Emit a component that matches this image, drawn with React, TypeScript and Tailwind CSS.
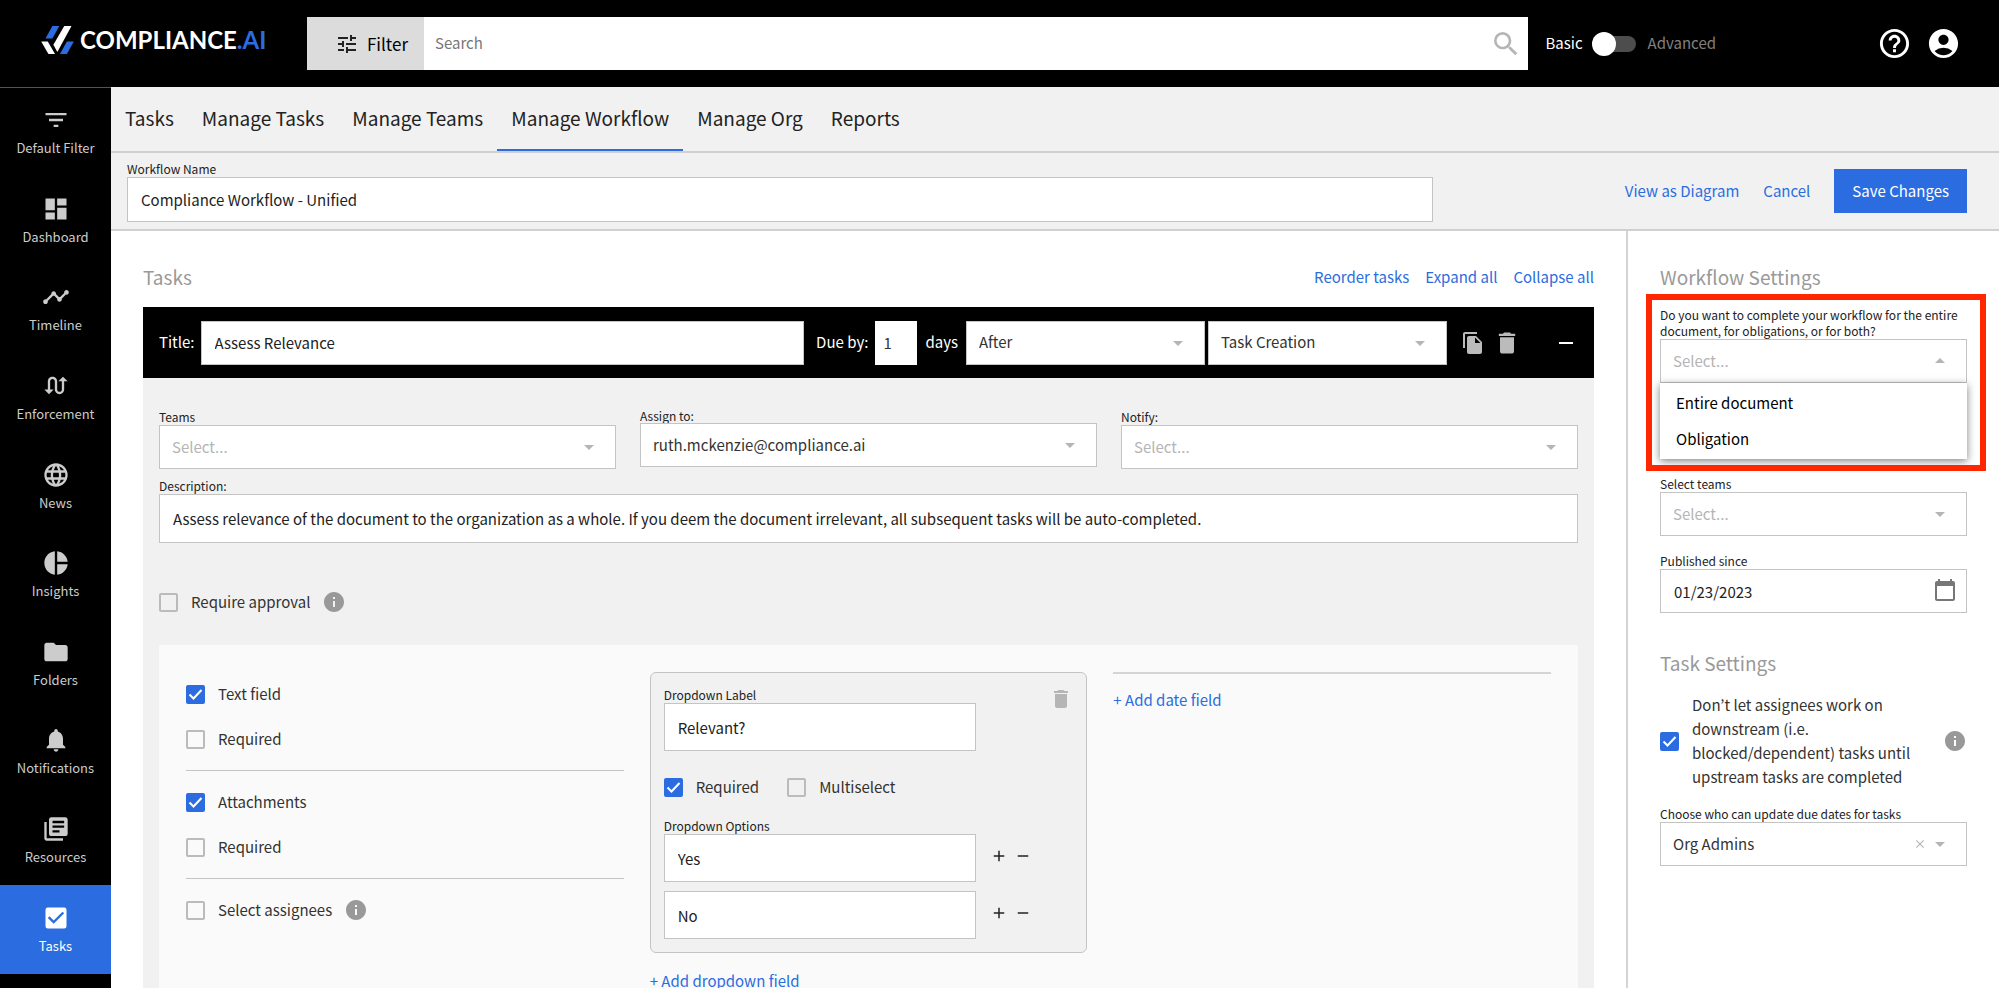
import { useState } from "react";
import type { ReactNode } from "react";
import type { IconType } from "react-icons";
import {
  MdAccountCircle,
  MdAdd,
  MdArrowDropDown,
  MdArrowDropUp,
  MdCalendarToday,
  MdCheckBox,
  MdClose,
  MdDashboard,
  MdDelete,
  MdFileCopy,
  MdFilterList,
  MdFolder,
  MdHelpOutline,
  MdInfo,
  MdLanguage,
  MdLibraryBooks,
  MdNotifications,
  MdPieChart,
  MdRemove,
  MdSearch,
  MdSwapCalls,
  MdTimeline,
  MdTune,
} from "react-icons/md";
import clsx from "clsx";

const sideItems: { label: string; icon: IconType }[] = [
  { label: "Default Filter", icon: MdFilterList },
  { label: "Dashboard", icon: MdDashboard },
  { label: "Timeline", icon: MdTimeline },
  { label: "Enforcement", icon: MdSwapCalls },
  { label: "News", icon: MdLanguage },
  { label: "Insights", icon: MdPieChart },
  { label: "Folders", icon: MdFolder },
  { label: "Notifications", icon: MdNotifications },
  { label: "Resources", icon: MdLibraryBooks },
  { label: "Tasks", icon: MdCheckBox },
];

const tabs = ["Tasks", "Manage Tasks", "Manage Teams", "Manage Workflow", "Manage Org", "Reports"];

const Logo = () => (
  <a href="#" className="flex items-center gap-[6px] text-white">
    <svg viewBox="122 78 99 85" className="w-[33px] h-[28px]" aria-hidden="true">
      <path d="M156 78h21l-21 38h-21z" fill="#2b6de0" />
      <path d="M122 125h20l22 38h-20z" fill="#fff" />
      <path d="M192 78h22l-43 79-12-22z" fill="#fff" />
      <path d="M200 125h21l-21 38h-21z" fill="#2b6de0" />
    </svg>
    <span className="font-[Lato] font-bold text-2xl leading-7">
      COMPLIANCE<span className="text-[#2b6de0]">.AI</span>
    </span>
  </a>
);

const Header = () => {
  const [advanced, setAdvanced] = useState(false);

  return (
    <header className="flex h-[87px] shrink-0 items-center bg-black pr-[38px] text-white">
      <div className="w-[307px] shrink-0 pl-[41px] pb-[7px]">
        <Logo />
      </div>
      <div className="flex h-[53px] flex-1 bg-white">
        <button className="flex w-[117px] items-center justify-center gap-2 bg-[#dcdcdc] pl-3 text-[17px] text-black">
          <MdTune className="h-6 w-6 text-[#222]" />
          Filter
        </button>
        <input
          aria-label="Search"
          placeholder="Search"
          className="min-w-0 flex-1 px-[11px] text-black outline-none placeholder:text-[#777]"
        />
        <button aria-label="Run search" className="px-[6px] text-[#b5b5b5]">
          <MdSearch className="h-8 w-8" />
        </button>
      </div>
      <div className="ml-[17px] flex items-center">
        <span>Basic</span>
        <button
          role="switch"
          aria-checked={advanced}
          aria-label="Advanced search"
          onClick={() => setAdvanced(!advanced)}
          className="relative mr-3 ml-[13px] h-4 w-10 rounded-full bg-[#4d4d4d]"
        >
          <span
            className={clsx(
              "absolute -top-1 h-6 w-6 rounded-full bg-white",
              advanced ? "right-0" : "left-[-4px]"
            )}
          />
        </button>
        <span className="text-[#808080]">Advanced</span>
      </div>
      <div className="ml-[161px] flex gap-[14px]">
        <button aria-label="Help">
          <MdHelpOutline className="h-[35px] w-[35px]" />
        </button>
        <button aria-label="Account">
          <MdAccountCircle className="h-[35px] w-[35px]" />
        </button>
      </div>
    </header>
  );
};

const SideNav = () => (
  <nav className="w-[111px] shrink-0 bg-black border-t border-[#555]">
    <div className="grid h-[886px] grid-rows-10">
      {sideItems.map(({ label, icon: Icon }) => (
        <a
          key={label}
          href="#"
          className={clsx(
            "flex flex-col items-center justify-center gap-1 text-[13px] leading-5",
            label === "Tasks" ? "bg-[#2b6de0] text-white" : "text-[#ccc]"
          )}
        >
          <Icon className="h-7 w-7" />
          {label}
        </a>
      ))}
    </div>
  </nav>
);

interface FieldProps {
  id: string;
  label: string;
  tight?: boolean;
  className?: string;
  children: ReactNode;
}

const Field = ({ id, label, tight, className, children }: FieldProps) => (
  <div className={className}>
    <label htmlFor={id} className={clsx("block text-xs text-[#222]", tight ? "leading-[14px]" : "leading-4")}>
      {label}
    </label>
    {children}
  </div>
);

interface SelectProps {
  id?: string;
  label?: string;
  value?: string;
  open?: boolean;
  clearable?: boolean;
  className?: string;
}

const Select = ({ id, label, value, open, clearable, className }: SelectProps) => {
  const Arrow = open ? MdArrowDropUp : MdArrowDropDown;
  return (
    <div className={clsx("relative", className)}>
      <select
        id={id}
        aria-label={label}
        className={clsx(
          "block h-11 w-full appearance-none border border-[#c4c4c4] bg-white px-3 outline-none",
          value ? "text-[#333]" : "text-[#b5b5b5]"
        )}
      >
        <option>{value ?? "Select..."}</option>
      </select>
      {clearable && (
        <button aria-label="Clear" className="absolute right-10 top-[15px] text-[#b5b5b5]">
          <MdClose className="h-3.5 w-3.5" />
        </button>
      )}
      <Arrow className="pointer-events-none absolute right-[15px] top-[10px] h-6 w-6 text-[#b5b5b5]" />
    </div>
  );
};

const inputClass = "block border border-[#c4c4c4] bg-white px-[13px] text-[#222] outline-none";

interface CheckProps {
  label: string;
  checked?: boolean;
}

const Check = ({ label, checked }: CheckProps) => (
  <label className="flex items-center gap-[13px] leading-6 text-[#333]">
    <span className="relative h-[19px] w-[19px] shrink-0">
      <input
        type="checkbox"
        defaultChecked={checked}
        className="peer block h-[19px] w-[19px] appearance-none rounded-[2px] border-2 border-[#bbb] checked:border-[#2b6de0] checked:bg-[#2b6de0]"
      />
      <svg
        viewBox="0 0 19 19"
        className="pointer-events-none absolute inset-0 hidden peer-checked:block"
        fill="none"
        stroke="#fff"
        strokeWidth="2"
      >
        <path d="M3.5 9.5l4 4 8-8.5" />
      </svg>
    </span>
    {label}
  </label>
);

const Info = () => <MdInfo className="h-6 w-6 shrink-0 text-[#999]" />;

const OptionRow = ({ value }: { value: string }) => (
  <div className="flex items-center">
    <input
      aria-label={`Option ${value}`}
      defaultValue={value}
      className={clsx(inputClass, "h-12 w-[312px] min-w-0")}
    />
    <button aria-label="Add option" className="ml-[14px] pb-1 text-[#222]">
      <MdAdd className="h-[18px] w-[18px]" />
    </button>
    <button aria-label="Remove option" className="ml-[6px] pb-1 text-[#222]">
      <MdRemove className="h-[18px] w-[18px]" />
    </button>
  </div>
);

const TaskFields = () => (
  <div className="mt-[31px] grid grid-cols-3 gap-[26px] bg-[#fafafa] px-[27px] pt-[27px] pb-10">
    <div className="pt-[10px]">
      <div className="flex flex-col gap-[21px] pb-[19px]">
        <Check label="Text field" checked />
        <Check label="Required" />
      </div>
      <div className="flex flex-col gap-[21px] border-y border-[#c4c4c4] py-[19px]">
        <Check label="Attachments" checked />
        <Check label="Required" />
      </div>
      <div className="flex items-center gap-3 pt-[19px]">
        <Check label="Select assignees" />
        <Info />
      </div>
    </div>

    <div>
      <div className="rounded-md border border-[#c4c4c4] bg-[#f1f1f1] px-[13px] pt-[14px] pb-[13px]">
        <div className="flex items-start justify-between">
          <Field id="dropdown-label" label="Dropdown Label">
            <input id="dropdown-label" defaultValue="Relevant?" className={clsx(inputClass, "h-12 w-[312px]")} />
          </Field>
          <button aria-label="Delete dropdown" className="text-[#b5b5b5]">
            <MdDelete className="h-6 w-6" />
          </button>
        </div>
        <div className="mt-6 flex gap-7">
          <Check label="Required" checked />
          <Check label="Multiselect" />
        </div>
        <p className="mt-[19px] text-xs leading-4 text-[#222]">Dropdown Options</p>
        <div className="flex flex-col gap-[9px]">
          <OptionRow value="Yes" />
          <OptionRow value="No" />
        </div>
      </div>
      <button className="mt-4 leading-6 text-[#2b6de0]">+ Add dropdown field</button>
    </div>

    <div>
      <div className="border-t-2 border-[#d4d4d4] pt-[14px]">
        <button className="leading-6 text-[#2b6de0]">+ Add date field</button>
      </div>
    </div>
  </div>
);

const TaskCard = () => (
  <section className="mt-4 bg-[#f1f1f1]">
    <div className="flex h-[71px] items-center bg-black px-4 text-white">
      <label htmlFor="task-title">Title:</label>
      <input
        id="task-title"
        defaultValue="Assess Relevance"
        className={clsx(inputClass, "ml-[6px] h-11 min-w-0 flex-1")}
      />
      <label htmlFor="due-by" className="ml-3">
        Due by:
      </label>
      <input id="due-by" defaultValue="1" className="ml-[7px] h-11 w-[42px] bg-white px-2 text-[#333] outline-none" />
      <span className="ml-2">days</span>
      <Select label="Before or after" value="After" className="ml-2 w-[239px]" />
      <Select label="Due date anchor" value="Task Creation" className="ml-[3px] w-[239px]" />
      <div className="ml-[14px] flex items-center text-[#bbb]">
        <button aria-label="Duplicate task">
          <MdFileCopy className="h-6 w-6" />
        </button>
        <button aria-label="Delete task" className="ml-2">
          <MdDelete className="h-7 w-7" />
        </button>
        <button aria-label="Collapse task" className="ml-[33px] text-white">
          <MdRemove className="h-6 w-6" />
        </button>
      </div>
    </div>

    <div className="px-4 pt-[31px]">
      <div className="grid grid-cols-3 gap-6">
        <Field id="teams" label="Teams">
          <Select id="teams" />
        </Field>
        <Field id="assign" label="Assign to:" tight>
          <Select id="assign" value="ruth.mckenzie@compliance.ai" />
        </Field>
        <Field id="notify" label="Notify:">
          <Select id="notify" />
        </Field>
      </div>
      <Field id="description" label="Description:" className="mt-[9px]">
        <input
          id="description"
          defaultValue="Assess relevance of the document to the organization as a whole. If you deem the document irrelevant, all subsequent tasks will be auto-completed."
          className={clsx(inputClass, "h-[49px] w-full")}
        />
      </Field>
      <div className="mt-[47px] flex items-center gap-3">
        <Check label="Require approval" />
        <Info />
      </div>
      <TaskFields />
    </div>
  </section>
);

const SettingsPanel = () => (
  <aside className="w-[373px] shrink-0 border-l-2 border-[#d4d4d4] px-8 pt-8">
    <h2 className="text-[19px] leading-7 text-[#999]">Workflow Settings</h2>
    <div className="relative mt-4">
      <Field id="scope" label="Do you want to complete your workflow for the entire document, for obligations, or for both?">
        <Select id="scope" open />
      </Field>
      <ul className="absolute top-full z-10 w-full bg-white text-black shadow-[0_2px_8px_rgba(0,0,0,0.5)]">
        <li className="px-4 pt-2 pb-1 leading-6">Entire document</li>
        <li className="px-4 pt-2 pb-2 leading-6">Obligation</li>
      </ul>
      {/* highlight around the open select */}
      <div className="pointer-events-none absolute -left-[14px] -right-[19px] -top-[13px] -bottom-[88px] z-20 border-6 border-[#ff2600]" />
    </div>
    <Field id="select-teams" label="Select teams" className="mt-[93px]">
      <Select id="select-teams" />
    </Field>
    <Field id="published" label="Published since" className="mt-[17px]">
      <div className="relative">
        <input id="published" defaultValue="01/23/2023" className={clsx(inputClass, "h-11 w-full")} />
        <button aria-label="Pick a date" className="absolute right-[10px] top-[9px] text-[#777]">
          <MdCalendarToday className="h-6 w-6" />
        </button>
      </div>
    </Field>

    <h2 className="mt-9 text-[19px] leading-7 text-[#999]">Task Settings</h2>
    <div className="mt-4 flex items-center justify-between">
      <div className="w-[260px]">
        <Check
          checked
          label="Don’t let assignees work on downstream (i.e. blocked/dependent) tasks until upstream tasks are completed"
        />
      </div>
      <Info />
    </div>
    <Field id="due-dates" label="Choose who can update due dates for tasks" className="mt-[17px]">
      <Select id="due-dates" value="Org Admins" clearable />
    </Field>
  </aside>
);

const App = () => {
  return (
    <div className="flex h-screen flex-col overflow-hidden bg-white font-['Noto_Sans_CJK_KR',sans-serif] text-[15px] text-[#222]">
      <Header />
      <div className="flex min-h-0 flex-1">
        <SideNav />
        <main className="flex min-w-0 flex-1 flex-col">
          <nav className="flex h-[66px] shrink-0 border-b-2 border-[#d0d0d0] bg-[#f1f1f1]">
            {tabs.map((tab) => (
              <a
                key={tab}
                href="#"
                className={clsx(
                  "flex items-center border-b-2 px-[14px] text-[19px]",
                  tab === "Manage Workflow" ? "border-[#2b6de0]" : "border-transparent"
                )}
              >
                {tab}
              </a>
            ))}
          </nav>

          <div className="flex h-[78px] shrink-0 items-start justify-between border-b-2 border-[#d0d0d0] bg-[#f1f1f1] pl-4 pr-8">
            <Field id="workflow-name" label="Workflow Name" className="w-[71%] pt-2">
              <input
                id="workflow-name"
                defaultValue="Compliance Workflow - Unified"
                className={clsx(inputClass, "h-[45px] w-full")}
              />
            </Field>
            <div className="mt-4 flex items-center gap-6 text-[#2b6de0]">
              <a href="#">View as Diagram</a>
              <button>Cancel</button>
              <button className="h-11 bg-[#2b6de0] px-[18px] text-white">Save Changes</button>
            </div>
          </div>

          <div className="flex min-h-0 flex-1">
            <div className="min-w-0 flex-1 overflow-hidden px-8 pt-8">
              <div className="flex items-center justify-between">
                <h2 className="text-[19px] leading-7 text-[#999]">Tasks</h2>
                <div className="flex gap-4 text-[#2b6de0]">
                  <button>Reorder tasks</button>
                  <button>Expand all</button>
                  <button>Collapse all</button>
                </div>
              </div>
              <TaskCard />
            </div>
            <SettingsPanel />
          </div>
        </main>
      </div>
    </div>
  );
};

export default App;
